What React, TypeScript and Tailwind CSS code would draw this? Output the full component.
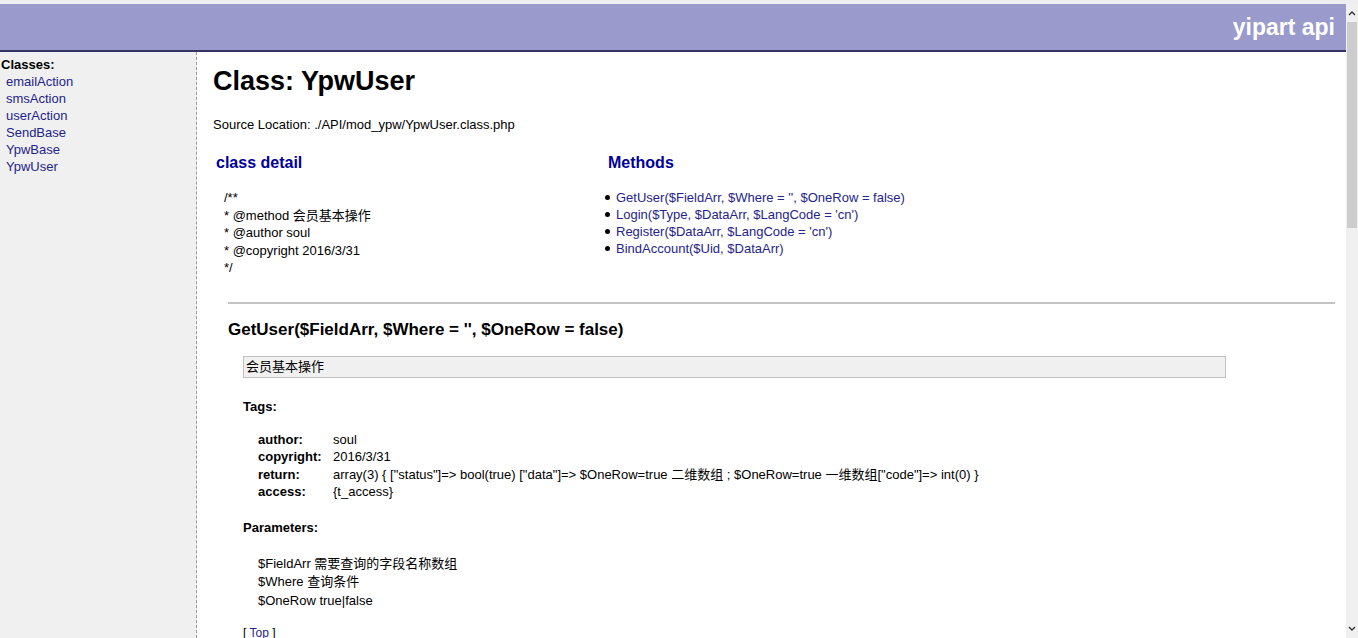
import React from "react";

const FONT = { fontFamily: '"Liberation Sans", "Noto Sans CJK SC", sans-serif' };

const classes = ["emailAction", "smsAction", "userAction", "SendBase", "YpwBase", "YpwUser"];
const methods = [
  "GetUser($FieldArr, $Where = '', $OneRow = false)",
  "Login($Type, $DataArr, $LangCode = 'cn')",
  "Register($DataArr, $LangCode = 'cn')",
  "BindAccount($Uid, $DataArr)",
];
const comment = ["/**", "* @method 会员基本操作", "* @author soul", "* @copyright 2016/3/31", "*/"];
const tags: [string, string][] = [
  ["author:", "soul"],
  ["copyright:", "2016/3/31"],
  ["return:", 'array(3) { ["status"]=> bool(true) ["data"]=> $OneRow=true 二维数组 ; $OneRow=true 一维数组["code"]=> int(0) }'],
  ["access:", "{t_access}"],
];
const params = ["$FieldArr 需要查询的字段名称数组", "$Where 查询条件", "$OneRow true|false"];

function Scrollbar() {
  return (
    <div className="w-[12px] flex flex-col bg-[#f0f0f0]">
      <div className="h-[18px] flex items-center justify-center">
        <svg width="8" height="6" viewBox="0 0 8 6">
          <path d="M1 5 L4 2 L7 5" stroke="#333" strokeWidth="1.4" fill="none" />
        </svg>
      </div>
      <div className="h-[206px] ml-[1px] mr-[1px] bg-[#cdcdcd]" />
      <div className="flex-1" />
      <div className="h-[18px] flex items-center justify-center">
        <svg width="8" height="6" viewBox="0 0 8 6">
          <path d="M1 1 L4 4 L7 1" stroke="#333" strokeWidth="1.4" fill="none" />
        </svg>
      </div>
    </div>
  );
}

export default function App() {
  return (
    <div className="w-[1358px] h-[638px] overflow-hidden bg-white flex flex-col text-[13px] text-black" style={FONT}>
      <div className="h-[4px] bg-[#eeeeee] shrink-0" />
      <div className="flex flex-1 min-h-0">
        <div className="flex-1 flex flex-col min-w-0">
          <div className="h-[48px] shrink-0 bg-[#9a9acc] border-b-2 border-[#333366] flex items-center justify-end pr-[11px]">
            <span className="text-[23px] font-bold text-white leading-none">yipart api</span>
          </div>
          <div className="flex flex-1 min-h-0">
            <div className="w-[197px] shrink-0 bg-[#f0f0f0] border-r border-dashed border-[#999999] pt-[4px]">
              <div className="pl-[1px] font-bold leading-[17px]">Classes:</div>
              <div className="pl-[6px] leading-[17px] text-[#24248c]">
                {classes.map((c) => (
                  <div key={c}>{c}</div>
                ))}
              </div>
            </div>
            <div className="flex-1 min-w-0 pl-[16px] pr-[11px]">
              <h1 className="mt-[13px] text-[27px] font-bold leading-[32px]">Class: YpwUser</h1>
              <div className="mt-[19px] leading-[17px]">Source Location: ./API/mod_ypw/YpwUser.class.php</div>
              <div className="mt-[20px] flex">
                <div className="w-[392px] shrink-0">
                  <h2 className="pl-[3px] text-[16px] font-bold leading-[20px] text-[#000099]">class detail</h2>
                  <div className="mt-[16px] pl-[11px] leading-[17.5px]">
                    {comment.map((l) => (
                      <div key={l}>{l}</div>
                    ))}
                  </div>
                </div>
                <div className="flex-1">
                  <h2 className="pl-[3px] text-[16px] font-bold leading-[20px] text-[#000099]">Methods</h2>
                  <ul className="mt-[16px] leading-[17px]">
                    {methods.map((m) => (
                      <li key={m} className="flex items-center">
                        <span className="w-[5px] h-[5px] rounded-full bg-black ml-[0px] mr-[6px]" />
                        <span className="text-[#24248c]">{m}</span>
                      </li>
                    ))}
                  </ul>
                </div>
              </div>
              <div className="pl-[15px]">
                <div className="mt-[25px] h-[2px] bg-[#c4c4c4]" />
                <h3 className="mt-[15px] text-[17px] font-bold leading-[21px]">
                  GetUser($FieldArr, $Where = '', $OneRow = false)
                </h3>
                <div className="pl-[15px]">
                  <div className="mt-[16px] w-[983px] h-[22px] bg-[#f0f0f0] border border-[#c0c0c0] pl-[2px] flex items-center">
                    会员基本操作
                  </div>
                  <div className="mt-[20px] font-bold leading-[17px]">Tags:</div>
                  <div className="mt-[16px] pl-[15px] leading-[17.5px]">
                    {tags.map(([k, v]) => (
                      <div key={k} className="flex">
                        <span className="w-[75px] shrink-0 font-bold">{k}</span>
                        <span>{v}</span>
                      </div>
                    ))}
                  </div>
                  <div className="mt-[18px] font-bold leading-[17px]">Parameters:</div>
                  <div className="mt-[19px] pl-[15px] leading-[18.5px]">
                    {params.map((p) => (
                      <div key={p}>{p}</div>
                    ))}
                  </div>
                  <div className="mt-[16px] text-[12px] leading-[15px]">
                    [ <span className="text-[#24248c]">Top</span> ]
                  </div>
                </div>
              </div>
            </div>
          </div>
        </div>
        <Scrollbar />
      </div>
    </div>
  );
}
